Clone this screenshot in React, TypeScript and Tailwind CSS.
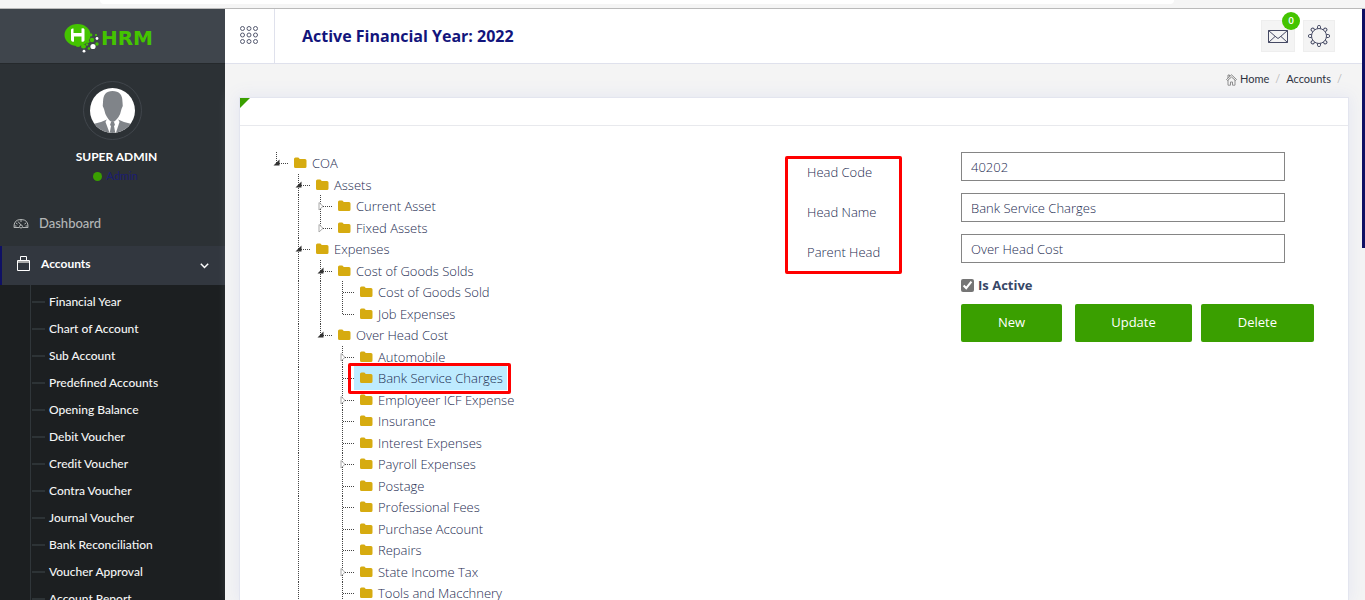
import React from "react";

type Mark = "open" | "closed" | "none";

interface TreeRow {
  label: string;
  level: number;
  mark: Mark;
  last?: boolean;
  rails?: number[];
  selected?: boolean;
}

const treeRows: TreeRow[] = [
  { label: "COA", level: 0, mark: "open", last: true },
  { label: "Assets", level: 1, mark: "open" },
  { label: "Current Asset", level: 2, mark: "closed", rails: [1] },
  { label: "Fixed Assets", level: 2, mark: "closed", rails: [1], last: true },
  { label: "Expenses", level: 1, mark: "open" },
  { label: "Cost of Goods Solds", level: 2, mark: "open", rails: [1] },
  { label: "Cost of Goods Sold", level: 3, mark: "none", rails: [1, 2] },
  { label: "Job Expenses", level: 3, mark: "none", rails: [1, 2], last: true },
  { label: "Over Head Cost", level: 2, mark: "open", rails: [1], last: true },
  { label: "Automobile", level: 3, mark: "closed", rails: [1] },
  { label: "Bank Service Charges", level: 3, mark: "none", rails: [1], selected: true },
  { label: "Employeer ICF Expense", level: 3, mark: "closed", rails: [1] },
  { label: "Insurance", level: 3, mark: "none", rails: [1] },
  { label: "Interest Expenses", level: 3, mark: "none", rails: [1] },
  { label: "Payroll Expenses", level: 3, mark: "closed", rails: [1] },
  { label: "Postage", level: 3, mark: "none", rails: [1] },
  { label: "Professional Fees", level: 3, mark: "none", rails: [1] },
  { label: "Purchase Account", level: 3, mark: "none", rails: [1] },
  { label: "Repairs", level: 3, mark: "none", rails: [1] },
  { label: "State Income Tax", level: 3, mark: "closed", rails: [1] },
  { label: "Tools and Macchnery", level: 3, mark: "none", rails: [1] },
];

const accountLinks = [
  "Financial Year",
  "Chart of Account",
  "Sub Account",
  "Predefined Accounts",
  "Opening Balance",
  "Debit Voucher",
  "Credit Voucher",
  "Contra Voucher",
  "Journal Voucher",
  "Bank Reconciliation",
  "Voucher Approval",
  "Account Report",
];

function Rail({ on }: { on: boolean }) {
  return (
    <svg width="22" height="22" viewBox="0 0 22 22" className="shrink-0" aria-hidden="true">
      {on && <path d="M4.5 0V22" stroke="#444" strokeDasharray="1 1" />}
    </svg>
  );
}

function Branch({ mark, last }: { mark: Mark; last?: boolean }) {
  return (
    <svg width="22" height="22" viewBox="0 0 22 22" className="shrink-0" aria-hidden="true">
      <path d={last ? "M4.5 0V11" : "M4.5 0V22"} stroke="#444" strokeDasharray="1 1" />
      <path d="M5 11.5H16" stroke="#444" strokeDasharray="1 1" />
      {mark === "open" && <path d="M7.500 7.500V13.500H1.500Z" fill="#333" />}
      {mark === "closed" && <path d="M3 7.500V15L7 11.300Z" fill="#fff" stroke="#aaa" />}
    </svg>
  );
}

function Folder() {
  return (
    <svg width="13" height="12" viewBox="0 0 13 12" className="shrink-0" aria-hidden="true">
      <path d="M0 2Q0 0.500 1.500 0.500H4Q5.500 0.500 5.500 2H11Q12.500 2 12.500 3.500V9.500Q12.500 11 11 11H1.500Q0 11 0 9.500Z" fill="#d6ab10" />
    </svg>
  );
}

function Tree() {
  return (
    <ul role="tree" aria-label="Chart of accounts" className="font-light text-[#1c2b50]">
      {treeRows.map((row) => (
        <li
          key={row.label}
          role="treeitem"
          aria-level={row.level + 1}
          aria-selected={!!row.selected}
          className="relative flex items-center odd:h-[22px] even:h-[21px]"
        >
          {Array.from({ length: row.level }, (_, i) => (
            <Rail key={i} on={!!row.rails?.includes(i)} />
          ))}
          <Branch mark={row.mark} last={row.last} />
          <span className="relative flex items-center">
            {row.selected && (
              <>
                <span className="absolute -inset-y-0.5 -right-1 -left-1.5 bg-[#beebff]" />
                <span className="absolute -top-[5px] -right-2 -bottom-1.5 -left-3 z-10 rounded-xs border-3 border-[#ff0000]" />
              </>
            )}
            <a href="#tree" className="relative flex items-center gap-[5px] whitespace-nowrap leading-5">
              <Folder />
              {row.label}
            </a>
          </span>
        </li>
      ))}
    </ul>
  );
}

function Logo() {
  return (
    <a href="#home" aria-label="HRM" className="flex items-center gap-px">
      <svg width="36" height="30" viewBox="0 0 36 30" aria-hidden="true">
        <ellipse cx="13.500" cy="12" rx="13" ry="11" fill="#44c400" />
        <path d="M7 7Q7 5 9.500 5.500V10H17.500V5.500Q20 4.500 20.500 6.500V17.500Q19.500 19.500 17.500 18.500V13.500H10V18.500Q7.500 19.500 7 17Z" fill="#fff" />
        <g fill="#44c400">
          <ellipse cx="14" cy="22" rx="2.500" ry="2" />
          <ellipse cx="19.500" cy="23.500" rx="2.500" ry="2" />
          <circle cx="24" cy="18.500" r="1.500" />
          <circle cx="28" cy="17" r="2.200" />
          <circle cx="27" cy="12" r="1.400" />
          <circle cx="32" cy="12" r="1.100" />
          <circle cx="33" cy="21" r="1.700" />
          <circle cx="25" cy="25.500" r="1.300" />
          <circle cx="23" cy="21.500" r="1.200" />
        </g>
        <g fill="#fff">
          <circle cx="29" cy="23.500" r="2.600" />
          <circle cx="33" cy="15.500" r="1.400" />
          <circle cx="20" cy="28.200" r="1.400" />
        </g>
      </svg>
      <span className="font-['DejaVu_Sans',sans-serif] text-xl leading-6 font-bold text-[#44c400]">HRM</span>
    </a>
  );
}

function Avatar() {
  return (
    <svg width="59" height="59" viewBox="0 0 59 59" role="img" aria-label="Super Admin">
      <defs>
        <clipPath id="face">
          <circle cx="29.500" cy="29.500" r="22.500" />
        </clipPath>
      </defs>
      <circle cx="29.500" cy="29.500" r="29" fill="none" stroke="#41464c" />
      <g clipPath="url(#face)">
        <rect width="59" height="59" fill="#fff" />
        <path d="M7 45Q12 42 18 41L24 38.500L29 49L35 38.500L41 41Q47 42 52 45V59H7Z" fill="#808489" />
        <path d="M24 38L22.500 41L27 53H32.500L36.500 41L35 38Z" fill="#fff" />
        <path d="M28 41H31L32 44L31 45L32.500 53H26.500L28 45L27 44Z" fill="#808489" />
        <path d="M20 21Q20 10 29.500 10Q39.500 10 39.500 21Q40.500 25 38.500 28Q37.500 33 35.500 36Q32 41 29.500 41Q27 41 24 36Q22 33 21 28Q19 25 20 21Z" fill="#808489" />
      </g>
    </svg>
  );
}

function Sidebar() {
  return (
    <aside className="flex w-[225px] shrink-0 flex-col overflow-hidden bg-[#1c1f21] font-[Lato,sans-serif]">
      <div className="flex h-[54px] shrink-0 items-center justify-center bg-[#3f454c] pr-2 pt-1">
        <Logo />
      </div>
      <div className="flex shrink-0 flex-col items-center border-t border-[#25292c] bg-[#2c3135] pt-[17px]">
        <Avatar />
        <p className="mt-2 pl-2 text-xs leading-[18px] font-bold text-white">SUPER ADMIN</p>
        <p className="mt-0.5 flex items-center gap-1 pl-1.5 text-[11px] leading-4 text-[#1b1c72]">
          <span className="size-[9px] rounded-full bg-[#3a9f00]" />
          Admin
        </p>
      </div>
      <nav className="flex flex-col">
        <a href="#dashboard" className="flex h-[62px] items-center gap-2.5 bg-[#2c3135] pt-[18px] pl-[13px] text-[13px] font-medium text-[#b3b6b6]">
          <svg width="16" height="12" viewBox="0 0 16 12" fill="none" stroke="#b3b6b6" aria-hidden="true">
            <path d="M1 9.500Q0.500 1.500 8 1.500Q15.500 1.500 15 9.500H9.500M1 9.500H6.500" />
            <circle cx="8" cy="8.500" r="1.500" />
            <path d="M8 7L5 3.500M8 1.500V4M3 5L4.500 6M13 5L11.500 6M1.500 8H3.500M14.500 8H12.500" />
          </svg>
          Dashboard
        </a>
        <a href="#accounts" className="flex h-[39px] items-center border-l-2 border-[#0f1064] bg-[#32373f] pr-4 pb-1 pl-3.5 text-xs font-bold text-white">
          <svg width="15" height="16" viewBox="0 0 15 16" fill="none" stroke="#fff" aria-hidden="true">
            <path d="M1.500 4.500H13.500V14.500H1.500Z" />
            <path d="M4.500 4V0.500H10.500V4" />
            <path d="M2 6H13" stroke="#aaa" strokeWidth="2" />
          </svg>
          <span className="ml-2.5 flex-1">Accounts</span>
          <svg width="9" height="6" viewBox="0 0 9 6" className="mt-1" fill="none" stroke="#fff" strokeWidth="1.500" aria-hidden="true">
            <path d="M0.800 0.800L4.500 4.500L8.200 0.800" />
          </svg>
        </a>
        <ul className="ml-[30px] border-l border-[#30363a] pt-[3px] pl-px">
          {accountLinks.map((label) => (
            <li key={label}>
              <a href="#account" className="flex h-[27px] items-center gap-1 text-xs font-medium text-[#f4f5f5]">
                <span className="h-0.5 w-[13px] bg-[#2d3336]" />
                {label}
              </a>
            </li>
          ))}
        </ul>
      </nav>
    </aside>
  );
}

function Header() {
  return (
    <header className="flex h-[55px] shrink-0 border-b border-[#dfe1ec] bg-white">
      <button type="button" aria-label="Toggle menu" className="flex w-[50px] items-center justify-center border-r border-[#dfe1ec] pr-0.5 pb-0.5">
        <svg width="20" height="20" viewBox="0 0 20 20" fill="none" stroke="#555a70" aria-hidden="true">
          {[3.5, 10, 16.5].map((y) => [3.5, 10, 16.5].map((x) => <circle key={`${x}-${y}`} cx={x} cy={y} r="2" />))}
        </svg>
      </button>
      <h1 className="flex flex-1 items-center pl-[27px] text-base font-bold text-[#12157c]">Active Financial Year: 2022</h1>
      <div className="flex items-center gap-2 pr-[30px]">
        <button type="button" aria-label="Messages" className="relative flex size-8 items-center justify-center border border-[#eee] bg-[#f4f4f4] px-4">
          <svg width="20" height="13" viewBox="0 0 20 13" className="shrink-0" fill="none" stroke="#454963" aria-hidden="true">
            <path d="M0.500 0.500H19.500V12.500H0.500Z" />
            <path d="M0.500 0.500L8 7Q10 10 12 7L19.500 0.500M0.500 12.500L7 6.500M19.500 12.500L13 6.500" />
          </svg>
          <span className="absolute -top-[9px] -right-1.5 flex size-[18px] items-center justify-center rounded-full bg-[#44c400] font-[Lato,sans-serif] text-[9px] font-bold text-white">0</span>
        </button>
        <button type="button" aria-label="Settings" className="flex size-8 items-center justify-center border border-[#eee] bg-[#f4f4f4]">
          <svg width="22" height="22" viewBox="0 0 22 22" className="shrink-0" fill="none" stroke="#454963" aria-hidden="true">
            <circle cx="11" cy="11" r="7.500" />
            {[0, 45, 90, 135, 180, 225, 270, 315].map((a) => (
              <path key={a} d="M9.500 3.500V1.500Q9.500 0.500 11 0.500Q12.500 0.500 12.500 1.500V3.500" transform={`rotate(${a} 11 11)`} />
            ))}
          </svg>
        </button>
      </div>
    </header>
  );
}

function AccountForm() {
  return (
    <form className="flex items-start" onSubmit={(e) => e.preventDefault()}>
      <div className="mt-1 mr-[59px] flex w-[117px] flex-col gap-5 rounded-xs border-3 border-[#ff0000] pt-[3px] pb-[9px] pl-[19px] leading-5 font-light text-[#1c2b50]">
        <label htmlFor="code">Head Code</label>
        <label htmlFor="name">Head Name</label>
        <label htmlFor="parent">Parent Head</label>
      </div>
      <div>
        <div className="flex w-[324px] flex-col gap-3 font-light text-[#1c2b50]">
          <input id="code" defaultValue="40202" className="h-[29px] border border-[#858585] px-[9px]" />
          <input id="name" defaultValue="Bank Service Charges" className="h-[29px] border border-[#858585] px-[9px]" />
          <input id="parent" defaultValue="Over Head Cost" className="h-[29px] border border-[#858585] px-[9px]" />
        </div>
        <label className="mt-3 flex items-center gap-1 font-bold leading-5">
          <input type="checkbox" defaultChecked className="size-[13px] accent-[#757575]" />
          Is Active
        </label>
        <div className="mt-[9px] flex gap-[9px] text-white">
          <button type="submit" className="mr-1 h-[38px] rounded-xs bg-[#3a9f00] px-[37px]">New</button>
          <button type="submit" className="h-[38px] rounded-xs bg-[#3a9f00] px-9">Update</button>
          <button type="submit" className="h-[38px] rounded-xs bg-[#3a9f00] px-[37px]">Delete</button>
        </div>
      </div>
    </form>
  );
}

export default function App() {
  return (
    <div className="flex h-screen flex-col overflow-hidden font-['Open_Sans',sans-serif] text-[13px] text-[#374767]">
      <div className="h-[9px] shrink-0 border-b border-[#bababa] bg-[#f5f5f5] pr-[191px] pl-[100px]">
        <div className="h-1 rounded-b-sm bg-white" />
      </div>
      <div className="flex min-h-0 flex-1">
        <Sidebar />
        <div className="relative flex min-w-0 flex-1 flex-col bg-[#f4f4f4]">
          <Header />
          <nav aria-label="Breadcrumb" className="flex h-[33px] shrink-0 items-center justify-end pr-[23px] pb-0.5 font-[Lato,sans-serif] text-[11px] text-[#2a2f3c]">
            <a href="#home" className="flex items-center gap-[3px]">
              <svg width="11" height="12" viewBox="0 0 11 12" fill="none" stroke="#888" aria-hidden="true">
                <path d="M0.500 5.500L5.500 0.800L10.500 5.500L9.500 6.500L5.500 3L1.500 6.500ZM2 6V11.200H4.500V8H6.500V11.200H9V6M2 4V1H3.500V2.500" />
              </svg>
              Home
            </a>
            <span className="px-1.5 text-[#bbb]">/</span>
            <a href="#accounts">Accounts</a>
            <span className="pl-1.5 text-[#bbb]">/</span>
          </nav>
          <main className="mx-3.5 mr-4 flex min-h-0 flex-1 flex-col overflow-hidden border border-b-0 border-[#e3e5ef] bg-white shadow-[0_0_15px_2px_#e6e8f2]">
            <div className="h-7 shrink-0 border-b border-[#e8e9ed]">
              <svg width="10" height="10" viewBox="0 0 10 10" aria-hidden="true">
                <path d="M0 0H10L0 10Z" fill="#3a9f00" />
              </svg>
            </div>
            <div className="flex items-start justify-between pt-[26px] pr-[34px] pl-8">
              <Tree />
              <AccountForm />
            </div>
          </main>
          <div className="absolute top-0 right-0 h-[239px] w-[3px] bg-[#0f1064]" />
        </div>
      </div>
    </div>
  );
}
